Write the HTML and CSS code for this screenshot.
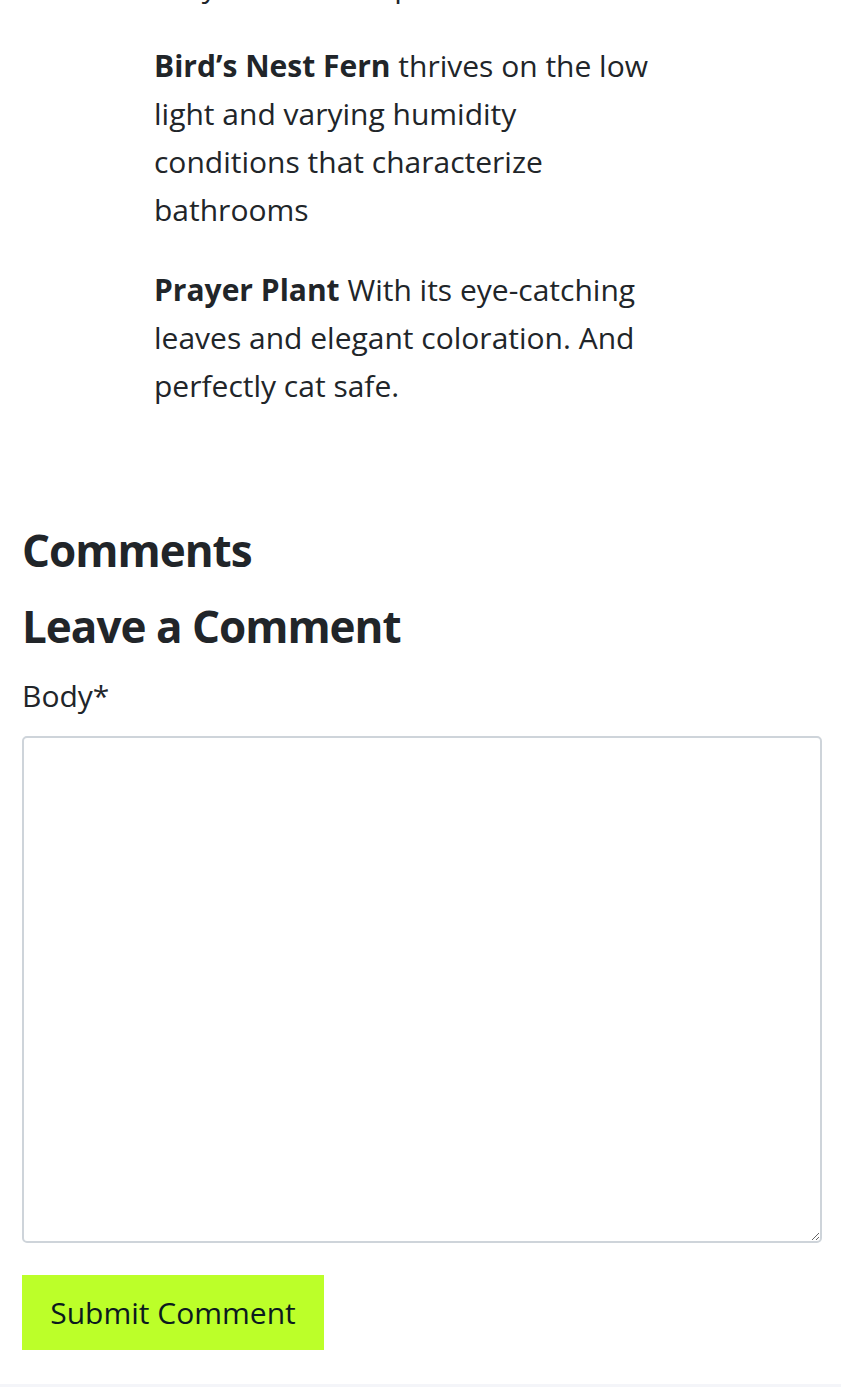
FILE: index.html
```html
<!DOCTYPE html>
<html lang="en">
<head>
<meta charset="utf-8">
<title>Comments</title>
<link rel="stylesheet" href="styles.css">
</head>
<body>
<main class="page">
  <article class="post">
    <p class="post-text post-text--cut">Easy to tend and pet safe.</p>
    <p class="post-text"><strong>Bird’s Nest Fern</strong> thrives on the low light and varying humidity conditions that characterize bathrooms</p>
    <p class="post-text"><strong>Prayer Plant</strong> With its eye-catching leaves and elegant coloration. And perfectly cat safe.</p>
  </article>
  <section class="comments">
    <h2 class="comments-title">Comments</h2>
    <h2 class="comments-title">Leave a Comment</h2>
    <form class="comment-form">
      <label class="field-label" for="body">Body*</label>
      <textarea class="field-textarea" id="body" name="body"></textarea>
      <button class="submit-btn" type="button">Submit Comment</button>
    </form>
  </section>
</main>
<div class="footer-edge"></div>
</body>
</html>
```
FILE: styles.css
```css
html, body {
  margin: 0;
  padding: 0;
  background: #ffffff;
}
body {
  font-family: "Open Sans", Lato, sans-serif;
  color: #212529;
  overflow: hidden;
  height: 1387px;
  display: flex;
  flex-direction: column;
}
.page {
  padding: 0 19px 0 22px;
  flex: 1;
}
.post {
  padding-left: 132px;
  max-width: 500px;
  margin-top: -38px;
}
.post-text {
  font-size: 30px;
  line-height: 48px;
  margin: 0 0 32px;
}
.post-text--cut {
  white-space: nowrap;
}
.post-text strong {
  font-weight: 700;
}
.comments {
  padding-top: 70px;
}
.comments-title {
  font-size: 44px;
  line-height: 76px;
  font-weight: 700;
  margin: 0;
  letter-spacing: -1px;
}
.comment-form {
  display: flex;
  flex-direction: column;
  align-items: flex-start;
}
.field-label {
  font-size: 30px;
  line-height: 40px;
  margin-top: 12px;
  margin-bottom: 20px;
}
.field-textarea {
  width: 800px;
  height: 507px;
  box-sizing: border-box;
  border: 2px solid #ced4da;
  border-radius: 5px;
  font-family: inherit;
  font-size: 30px;
  resize: vertical;
  margin: 0;
}
.submit-btn {
  margin-top: 32px;
  background: #bcff29;
  border: none;
  border-radius: 0;
  color: #0b1a1e;
  font-family: inherit;
  font-size: 30px;
  height: 75px;
  width: 302px;
  padding: 0;
}
.footer-edge {
  height: 3px;
  background: #f4f5f9;
}
```
